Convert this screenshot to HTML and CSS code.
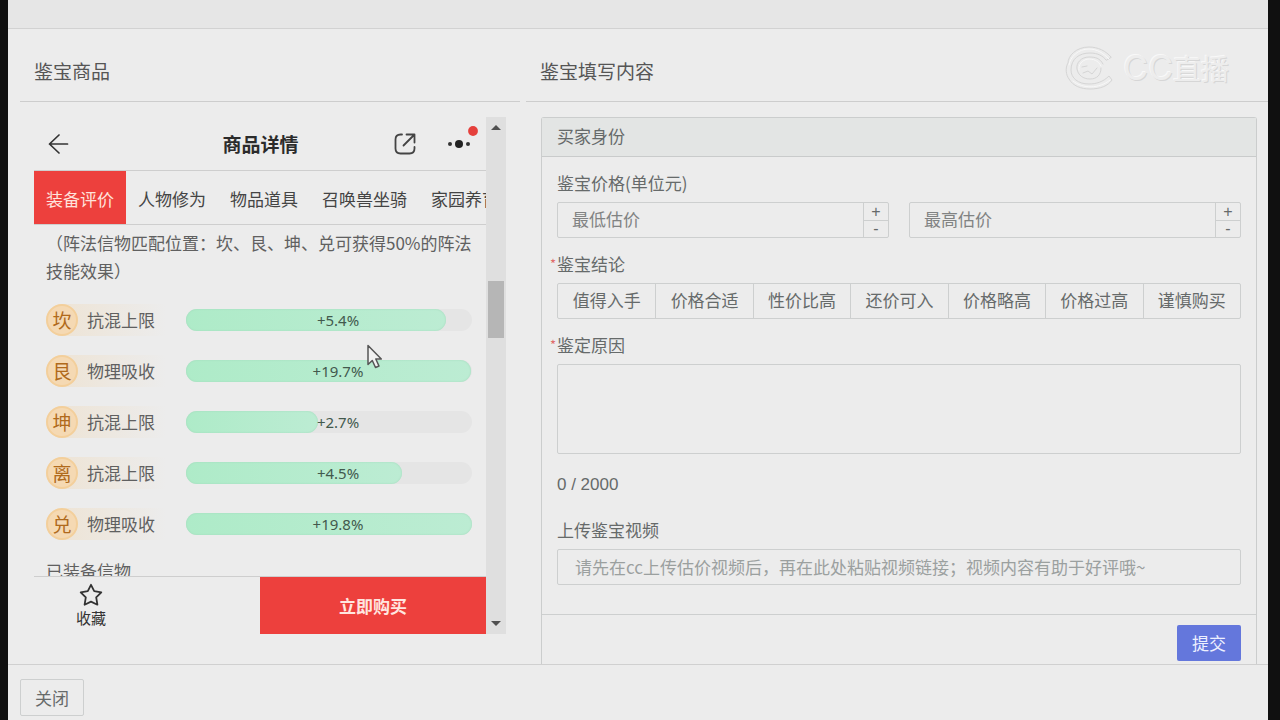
FILE: index.html
```html
<!DOCTYPE html>
<html lang="zh-CN">
<head>
<meta charset="utf-8">
<title>鉴宝</title>
<link rel="stylesheet" href="styles.css">
</head>
<body>
<div class="dialog">
  <div class="dialog-top"></div>
  <main class="dialog-body">
    <section class="column column-goods">
      <h2 class="column-title">鉴宝商品</h2>
      <div class="viewer">
        <div class="phone">
          <header class="phone-header">
            <button class="icon-button" aria-label="返回">
              <svg width="22" height="22" viewBox="0 0 22 22" fill="none" stroke="#333" stroke-width="1.7" stroke-linecap="round" stroke-linejoin="round"><path d="M12 2L2.500 11L12 20M2.500 11H20.500"/></svg>
            </button>
            <h3 class="phone-title">商品详情</h3>
            <button class="icon-button share" aria-label="分享">
              <svg width="22" height="22" viewBox="0 0 22 22" fill="none" stroke="#444" stroke-width="1.800" stroke-linecap="round" stroke-linejoin="round"><path d="M8 1.500H6.500Q1.500 1.500 1.500 6.500V15.500Q1.500 20.500 6.500 20.500H15.500Q20.500 20.500 20.500 15.500V14"/><path d="M9.500 12.500L20 2M12.500 1.500H20.500V9.500"/></svg>
            </button>
            <button class="icon-button" aria-label="更多">
              <svg width="34" height="32" viewBox="0 0 34 32"><circle cx="6" cy="18" r="2" fill="#333"/><circle cx="15" cy="18" r="4" fill="#222"/><circle cx="24" cy="18" r="2" fill="#333"/><circle cx="29" cy="5" r="4.900" fill="#e5403c"/></svg>
            </button>
          </header>
          <nav class="tabs">
            <button class="tab tab-active">装备评价</button>
            <button class="tab">人物修为</button>
            <button class="tab">物品道具</button>
            <button class="tab">召唤兽坐骑</button>
            <button class="tab">家园养育</button>
          </nav>
          <div class="phone-content">
            <p class="note">（阵法信物匹配位置：坎、艮、坤、兑可获得50%的阵法技能效果）</p>
            <div class="stats">
              <div class="stat"><span class="stat-name"><b class="rune">坎</b>抗混上限</span><span class="bar"><i class="bar-fill" style="width:91%"></i><span class="bar-text">+5.4%</span></span></div>
              <div class="stat"><span class="stat-name"><b class="rune">艮</b>物理吸收</span><span class="bar"><i class="bar-fill" style="width:99.500%"></i><span class="bar-text">+19.7%</span></span></div>
              <div class="stat"><span class="stat-name"><b class="rune">坤</b>抗混上限</span><span class="bar"><i class="bar-fill" style="width:46%"></i><span class="bar-text">+2.7%</span></span></div>
              <div class="stat"><span class="stat-name"><b class="rune">离</b>抗混上限</span><span class="bar"><i class="bar-fill" style="width:75.500%"></i><span class="bar-text">+4.5%</span></span></div>
              <div class="stat"><span class="stat-name"><b class="rune">兑</b>物理吸收</span><span class="bar"><i class="bar-fill" style="width:100%"></i><span class="bar-text">+19.8%</span></span></div>
            </div>
            <p class="equipped">已装备信物</p>
          </div>
          <footer class="phone-footer">
            <div class="favorite-area">
              <button class="favorite">
                <svg width="24" height="24" viewBox="0 0 24 24" fill="none" stroke="#333" stroke-width="1.800" stroke-linejoin="round"><path d="M12 1.800L15.200 8.200L22.300 9.300L17.200 14.300L18.400 21.700L12 18.600L5.600 21.700L6.800 14.300L1.700 9.300L8.800 8.200Z"/></svg>
                <span>收藏</span>
              </button>
            </div>
            <button class="buy">立即购买</button>
          </footer>
        </div>
        <div class="scrollbar" aria-hidden="true">
          <span class="arrow arrow-up"></span>
          <span class="thumb"></span>
          <span class="arrow arrow-down"></span>
        </div>
      </div>
    </section>

    <section class="column column-form">
      <h2 class="column-title">鉴宝填写内容</h2>
      <form class="card">
        <h3 class="card-title">买家身份</h3>
        <div class="card-body">
          <label class="label" for="low">鉴宝价格(单位元)</label>
          <div class="prices">
            <div class="number">
              <input class="number-input" id="low" type="text" placeholder="最低估价">
              <div class="steps"><button type="button" class="step">+</button><button type="button" class="step">-</button></div>
            </div>
            <div class="number">
              <input class="number-input" type="text" placeholder="最高估价" aria-label="最高估价">
              <div class="steps"><button type="button" class="step">+</button><button type="button" class="step">-</button></div>
            </div>
          </div>
          <span class="label required" id="verdict">鉴宝结论</span>
          <div class="options" role="group" aria-labelledby="verdict">
            <button type="button" class="option">值得入手</button>
            <button type="button" class="option">价格合适</button>
            <button type="button" class="option">性价比高</button>
            <button type="button" class="option">还价可入</button>
            <button type="button" class="option">价格略高</button>
            <button type="button" class="option">价格过高</button>
            <button type="button" class="option">谨慎购买</button>
          </div>
          <label class="label required" for="reason">鉴定原因</label>
          <textarea class="reason" id="reason"></textarea>
          <p class="counter">0 / 2000</p>
          <label class="label label-video" for="video">上传鉴宝视频</label>
          <input class="video" id="video" type="text" placeholder="请先在cc上传估价视频后，再在此处粘贴视频链接；视频内容有助于好评哦~">
        </div>
        <div class="card-footer"><button type="button" class="submit">提交</button></div>
      </form>
    </section>

    <div class="watermark">
      <svg width="50" height="44" viewBox="0 0 50 44" fill="none" stroke-linecap="round"><g stroke="#d5d5d5"><path d="M46 11C41 5 33 1 24 1C11 1 3 10 3 17C0 22 1 29 4 33C8 40 16 43 25 43C35 43 43 40 47 34L44 30C38 36 31 38 24 38C13 38 6 32 6 24C6 13 14 7 25 7C33 7 38 10 41 14Z"/><path d="M38 18C35 12 30 11 24 11C16 11 11 17 12 23C13 29 18 33 25 33C32 33 36 29 36 22"/><path d="M18 27L23 25L27 28L32 22M17 21L22 20"/></g><g stroke="#f8f8f8"><path d="M44 13C38 7 32 3 24 3C13 3 5 11 4 19M8 35C18 43 34 43 45 34"/><path d="M36 20C33 14 28 13 23 13C17 14 13 19 14 24"/></g></svg>
      <span><span class="watermark-latin">CC</span>直播</span>
    </div>
    <svg class="pointer" width="18" height="26" viewBox="0 0 18 26" fill="#f1f1f1" stroke="#555" stroke-width="1.500" stroke-linejoin="round"><path d="M2 1.500V20.500L6.300 16.500L9.500 23.500L13 22L9.800 15H15.300Z"/></svg>
  </main>
  <footer class="dialog-footer"><button class="close">关闭</button></footer>
</div>
</body>
</html>
```
FILE: styles.css
```css
* {
  box-sizing: border-box;
}

body {
  margin: 0;
  padding: 0 12px 0 8px;
  background: #101010;
  color: #666a6a;
  font: 17px/24px "Noto Sans CJK SC", sans-serif;
}

h2,
h3,
p {
  margin: 0;
  font-weight: 400;
}

button,
input,
textarea {
  margin: 0;
  padding: 0;
  border: 1px solid #cdcfcf;
  border-radius: 2px;
  background: transparent;
  color: inherit;
  font: inherit;
}

.dialog {
  display: flex;
  flex-direction: column;
  height: 100vh;
  background: #ececec;
}

.dialog-top {
  flex: none;
  height: 29px;
  border-bottom: 1px solid #d2d2d2;
  background: #e6e6e6;
}

.dialog-body {
  position: relative;
  display: flex;
  flex: 1;
  gap: 6px;
  min-height: 0;
  padding-left: 12px;
  overflow: hidden;
}

.column {
  display: flex;
  flex-direction: column;
  min-width: 0;
}

.column-goods {
  flex: 500 1 0;
}

.column-form {
  flex: 742 1 0;
}

.column-title {
  flex: none;
  padding: 27px 14px 16px;
  border-bottom: 1px solid #cdcdcd;
  color: #555;
  font-size: 19px;
  line-height: 29px;
}

.viewer {
  display: flex;
  flex: 1;
  min-height: 0;
  margin: 15px 14px 30px;
}

.phone {
  display: flex;
  flex: 1;
  flex-direction: column;
  min-width: 0;
}

.phone-header {
  display: grid;
  flex: none;
  grid-template-columns: 80px 1fr 50px 42px;
  align-items: center;
  height: 54px;
  padding-left: 13px;
  border-bottom: 1px solid #cecece;
}

.icon-button {
  display: flex;
  border: 0;
}

.icon-button:last-child {
  padding-bottom: 4px;
}

.share {
  justify-self: start;
}

.phone-title {
  color: #2b2b2b;
  font-size: 19px;
  font-weight: 700;
  text-align: center;
}

.tabs {
  display: flex;
  flex: none;
  height: 54px;
  border-bottom: 1px solid #cecece;
  overflow: hidden;
}

.tab {
  flex: none;
  padding: 2px 12px 0;
  border: 0;
  border-radius: 0;
  color: #444;
}

.tab-active {
  background: #ed403d;
  color: #ffe3dc;
}

.phone-content {
  flex: 1;
  min-height: 0;
  padding: 4px 14px 0 12px;
  overflow: hidden;
  color: #606060;
  line-height: 28px;
}

.stats {
  display: grid;
  gap: 19px;
  margin: 19px 0 17px;
}

.stat {
  display: grid;
  grid-template-columns: 120px 1fr;
  gap: 20px;
  align-items: center;
}

.stat-name {
  display: flex;
  align-items: center;
  gap: 9px;
  height: 32px;
  border-radius: 16px 0 0 16px;
  background: linear-gradient(90deg, #eee3d3, #ececec);
}

.rune {
  width: 32px;
  border: 2px solid #f3cf9b;
  border-radius: 50%;
  background: #f5d9b3;
  color: #b06a1c;
  font-size: 19px;
  font-weight: 400;
  line-height: 28px;
  text-align: center;
}

.bar {
  position: relative;
  display: flex;
  height: 22px;
  border-radius: 11px;
  background: #e5e5e5;
}

.bar-fill {
  border-radius: 11px;
  background: linear-gradient(90deg, #aeebc8, #bcecd3);
  box-shadow: inset 0 0 2px #9fd8b9;
}

.bar-text {
  position: absolute;
  inset: 0;
  padding: 0 0 0 18px;
  color: #42594d;
  font: 15px/23px "Noto Sans", "Noto Sans CJK SC", sans-serif;
  text-align: center;
}

.phone-footer {
  display: grid;
  flex: none;
  grid-template-columns: 1fr 1fr;
  height: 58px;
  border-top: 1px solid #cecece;
}

.favorite-area {
  display: flex;
  align-items: center;
  padding-left: 42px;
}

.favorite {
  display: grid;
  justify-items: center;
  border: 0;
  color: #333;
  font-size: 15px;
  line-height: 22px;
}

.buy {
  border: 0;
  border-radius: 0;
  background: #ed403d;
  color: #ffe6e0;
  font-weight: 700;
}

.scrollbar {
  display: flex;
  flex: none;
  flex-direction: column;
  align-items: center;
  width: 20px;
  padding: 8px 0;
  background: #dfdfdf;
}

.arrow {
  border: 5px solid transparent;
}

.arrow-up {
  border-top: 0;
  border-bottom: 5px solid #505050;
}

.arrow-down {
  margin-top: auto;
  border-top: 5px solid #505050;
  border-bottom: 0;
}

.thumb {
  width: 16px;
  height: 57px;
  margin-top: 151px;
  background: #b6b6b6;
}

.card {
  flex: none;
  margin: 15px 11px 0 15px;
  border: 1px solid #cbcdcd;
  border-bottom: 0;
  border-radius: 3px 3px 0 0;
}

.card-title {
  padding: 6px 15px 8px;
  border-bottom: 1px solid #c9cbcb;
  background: #e3e5e4;
  font-size: 17px;
}

.card-body {
  display: flex;
  flex-direction: column;
  padding: 0 15px 29px;
}

.label {
  position: relative;
  margin: 14px 0 7px;
}

.required::before {
  position: absolute;
  left: -7px;
  color: #e06a6a;
  font-size: 13px;
  content: "*";
}

.prices {
  display: grid;
  grid-template-columns: 1fr 1fr;
  gap: 20px;
}

.number {
  display: flex;
  height: 36px;
  border: 1px solid #cdcfcf;
  border-radius: 2px;
}

.number-input {
  flex: 1;
  min-width: 0;
  padding: 0 14px 2px;
  border: 0;
}

.number-input::placeholder {
  color: #818383;
}

.steps {
  display: grid;
  grid-template-rows: 1fr 1fr;
  width: 25px;
  border-left: 1px solid #cdcfcf;
}

.step {
  border: 0;
  border-radius: 0;
  font: 16px/16px "Liberation Sans", sans-serif;
}

.step + .step {
  border-top: 1px solid #cdcfcf;
}

.options {
  display: grid;
  grid-template-columns: repeat(7, 1fr);
  height: 36px;
  border: 1px solid #cdcfcf;
  border-radius: 2px;
}

.option {
  padding-bottom: 2px;
  border: 0;
  border-radius: 0;
}

.option + .option {
  border-left: 1px solid #cdcfcf;
}

.reason {
  height: 90px;
  padding: 8px 14px;
  resize: none;
}

.counter {
  margin-top: 19px;
  font-family: "Liberation Sans", sans-serif;
}

.label-video {
  margin-top: 21px;
}

.video {
  height: 36px;
  padding: 0 17px 2px;
}

.video::placeholder {
  color: #9ba09f;
}

.card-footer {
  display: flex;
  justify-content: flex-end;
  padding: 10px 15px;
  border-top: 1px solid #cdcfcf;
}

.submit {
  height: 36px;
  padding: 0 15px;
  border: 0;
  background: #6477dc;
  color: #edf0ff;
}

.dialog-footer {
  flex: none;
  padding: 14px 12px 4px;
  border-top: 1px solid #d0d0d0;
}

.close {
  display: block;
  height: 37px;
  padding: 0 14px;
}

.watermark {
  position: absolute;
  top: 17px;
  right: 39px;
  display: flex;
  align-items: center;
  gap: 8px;
  color: #ededed;
  font-size: 28px;
  line-height: 44px;
  text-shadow: 1px 1px 0 #d6d6d6, -1px -1px 0 #f8f8f8;
}

.watermark-latin {
  font-family: Inter, sans-serif;
  font-size: 34px;
  font-weight: 400;
}

.pointer {
  position: absolute;
  top: 315px;
  left: 358px;
}
```
